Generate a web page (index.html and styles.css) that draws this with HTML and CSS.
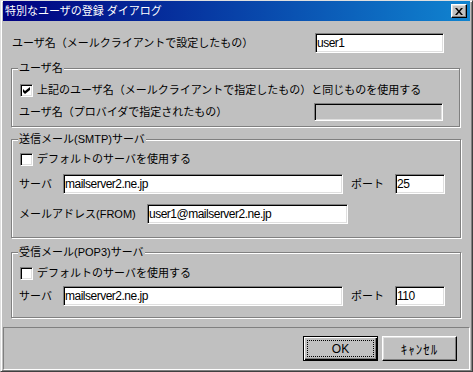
FILE: index.html
```html
<!DOCTYPE html>
<html lang="ja">
<head>
    <meta charset="UTF-8">
    <title>特別なユーザの登録 ダイアログ</title>
    <link rel="stylesheet" href="styles.css">
</head>
<body>
    <div class="window">
        <div class="titlebar">
            <span class="title">特別なユーザの登録 ダイアログ</span>
            <span class="close-btn">
                <svg width="8" height="7" viewBox="0 0 8 7">
                    <path d="M0 0h2l2 2.5L6 0h2L5 3.5 8 7H6L4 4.5 2 7H0l3-3.5z" fill="#000"/>
                </svg>
            </span>
        </div>

        <div class="main">
            <div class="row row-top">
                <span class="label">ユーザ名（メールクライアントで設定したもの）</span>
                <input type="text" class="field field-user" value="user1">
            </div>

            <fieldset class="group group-user">
                <legend>ユーザ名</legend>
                <div class="check-row check-first">
                    <span class="checkbox">
                        <svg width="7" height="7" viewBox="0 0 7 7">
                            <path d="M0 2l2 2 5-4v3L2 7 0 5z" fill="#000"/>
                        </svg>
                    </span>
                    <span class="label">上記のユーザ名（メールクライアントで指定したもの）と同じものを使用する</span>
                </div>
                <div class="row row-provider">
                    <span class="label">ユーザ名（プロバイダで指定されたもの）</span>
                    <input type="text" class="field field-provider" disabled>
                </div>
            </fieldset>

            <fieldset class="group group-smtp">
                <legend>送信メール(SMTP)サーバ</legend>
                <div class="check-row">
                    <span class="checkbox"></span>
                    <span class="label">デフォルトのサーバを使用する</span>
                </div>
                <div class="row row-server">
                    <span class="label label-server">サーバ</span>
                    <input type="text" class="field field-server" value="mailserver2.ne.jp">
                    <span class="label label-port">ポート</span>
                    <input type="text" class="field field-port" value="25">
                </div>
                <div class="row row-from">
                    <span class="label label-from">メールアドレス(FROM)</span>
                    <input type="text" class="field field-from" value="user1@mailserver2.ne.jp">
                </div>
            </fieldset>

            <fieldset class="group group-pop">
                <legend>受信メール(POP3)サーバ</legend>
                <div class="check-row">
                    <span class="checkbox"></span>
                    <span class="label">デフォルトのサーバを使用する</span>
                </div>
                <div class="row row-server">
                    <span class="label label-server">サーバ</span>
                    <input type="text" class="field field-server" value="mailserver2.ne.jp">
                    <span class="label label-port">ポート</span>
                    <input type="text" class="field field-port" value="110">
                </div>
            </fieldset>
        </div>

        <div class="footer">
            <button class="btn btn-default"><span class="focus">OK</span></button>
            <button class="btn btn-cancel">ｷｬﾝｾﾙ</button>
        </div>
    </div>
</body>
</html>
```

FILE: styles.css
```css
* {
    margin: 0;
    padding: 0;
    box-sizing: border-box;
}

body {
    background-color: #c0c0c0;
    color: #000;
    font-family: "Liberation Sans", "Noto Sans CJK JP", sans-serif;
    font-size: 11px;
    line-height: 15px;
}

.window {
    width: 473px;
    height: 372px;
    display: flex;
    flex-direction: column;
    background-color: #c0c0c0;
    border: 1px solid;
    border-color: #dfdfdf #404040 #404040 #dfdfdf;
    box-shadow: inset 1px 1px #fff, inset -1px -1px #808080;
    padding: 0 2px 1px 2px;
}

/* title bar */
.titlebar {
    height: 20px;
    display: flex;
    align-items: center;
    justify-content: space-between;
    padding: 0 3px 0 2px;
    background: linear-gradient(to right, #000080, #1084d0);
    color: #fff;
}

.title {
    font-size: 11px;
}

.close-btn {
    width: 16px;
    height: 14px;
    display: flex;
    align-items: center;
    justify-content: center;
    background-color: #c0c0c0;
    border: 1px solid;
    border-color: #fff #000 #000 #fff;
    box-shadow: inset -1px -1px #808080, inset 1px 1px #dfdfdf;
}

/* body */
.main {
    flex: 1;
    padding: 0 10px 0 8px;
}

.row {
    display: flex;
    align-items: center;
}

.row-top {
    height: 20px;
    margin-top: 12px;
    padding-left: 1px;
}

.label {
    white-space: nowrap;
}

.field {
    height: 20px;
    padding: 0 1px;
    background-color: #fff;
    border: 1px solid;
    border-color: #808080 #fff #fff #808080;
    box-shadow: inset 1px 1px #000, inset -1px -1px #dfdfdf;
    font-family: "Liberation Sans", sans-serif;
    font-size: 12px;
    letter-spacing: -0.5px;
    color: #000;
    outline: none;
}

.field:disabled {
    background-color: #c0c0c0;
}

.field-user {
    width: 129px;
    margin-left: auto;
    margin-right: 16px;
}

/* group boxes */
.group {
    border: 1px solid #808080;
    box-shadow: inset 1px 1px #fff, 1px 1px #fff;
    padding: 0 15px 0 7px;
}

.group legend {
    height: 15px;
    line-height: 15px;
    padding: 0 1px;
    margin-left: -1px;
    background-color: #c0c0c0;
}

.group-user {
    margin-top: 8px;
    padding-right: 16px;
    padding-bottom: 5px;
}

.group-smtp {
    margin-top: 5px;
    padding-bottom: 13px;
}

.group-pop {
    margin-top: 7px;
    padding-bottom: 11px;
}

.check-row {
    display: flex;
    align-items: center;
    height: 13px;
    margin-top: 6px;
}

.group-user .check-first {
    margin-top: 8px;
}

.group-pop .check-row {
    margin-top: 7px;
}

.checkbox {
    width: 13px;
    height: 13px;
    margin-left: 1px;
    margin-right: 4px;
    display: flex;
    align-items: center;
    justify-content: center;
    background-color: #fff;
    border: 1px solid;
    border-color: #808080 #fff #fff #808080;
    box-shadow: inset 1px 1px #000, inset -1px -1px #dfdfdf;
}

.row-provider {
    height: 18px;
    margin-top: 6px;
}

.field-provider {
    width: 129px;
    height: 18px;
    margin-left: auto;
}

.row-server {
    height: 20px;
    margin-top: 8px;
}

.group-pop .row-server {
    margin-top: 6px;
}

.label-server {
    width: 44px;
}

.field-server {
    width: 280px;
}

.label-port {
    width: 52px;
    padding-left: 8px;
}

.field-port {
    width: 50px;
}

.row-from {
    height: 20px;
    margin-top: 10px;
}

.label-from {
    width: 128px;
}

.field-from {
    width: 201px;
}

/* footer */
.footer {
    height: 43px;
    display: flex;
    justify-content: flex-end;
    align-items: flex-start;
    gap: 4px;
    padding: 8px 12px 0 0;
    border: 1px solid;
    border-color: #808080 #fff #fff #808080;
}

.btn {
    width: 75px;
    height: 25px;
    display: flex;
    align-items: center;
    justify-content: center;
    background-color: #c0c0c0;
    border: 1px solid;
    border-color: #fff #000 #000 #fff;
    box-shadow: inset -1px -1px #808080, inset 1px 1px #dfdfdf;
    font-family: "Liberation Sans", "Noto Sans CJK JP", sans-serif;
    font-size: 12px;
    color: #000;
}

.btn-default {
    border-color: #000;
    box-shadow: inset 1px 1px #fff, inset -1px -1px #000, inset -2px -2px #808080;
    padding: 3px;
}

.focus {
    width: 100%;
    height: 100%;
    display: flex;
    align-items: center;
    justify-content: center;
    border: 1px dotted #000;
}

.btn-cancel {
    font-family: "Noto Sans CJK JP", sans-serif;
    font-size: 13px;
    letter-spacing: 1px;
}
```
